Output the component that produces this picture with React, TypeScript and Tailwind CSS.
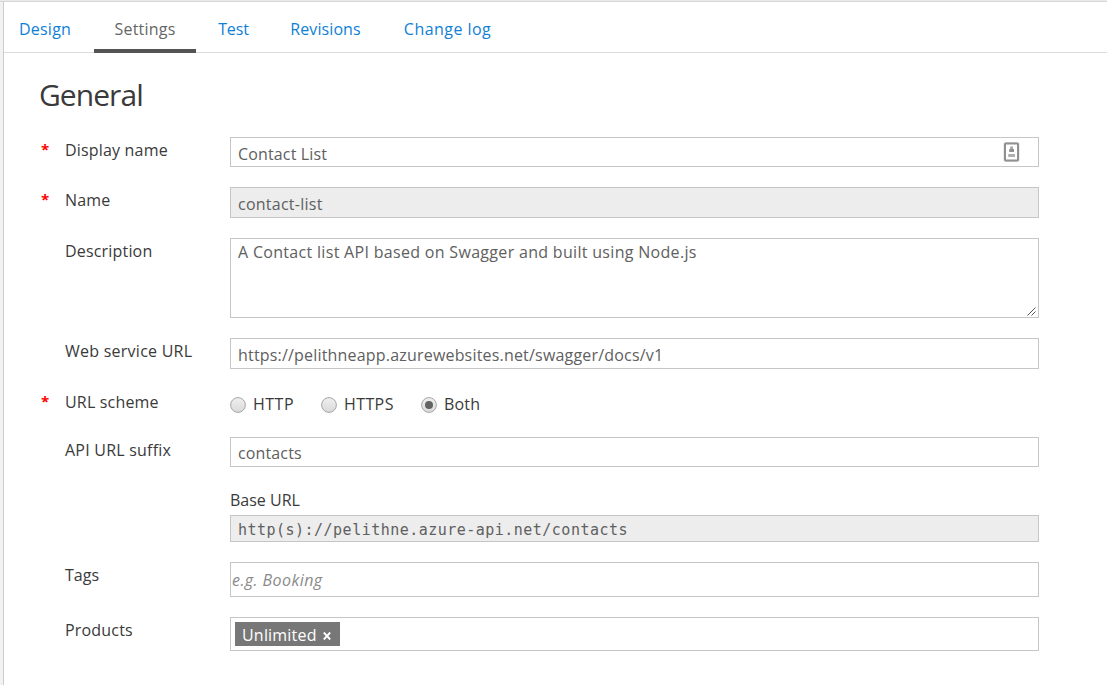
import React from "react";

const tabs = [
  { label: "Design", box: "ml-[15px] w-[52px]", tracking: "tracking-[0.25px]" },
  { label: "Settings", box: "ml-[23px] w-[102px] text-[#666]", tracking: "tracking-[0.2px]", active: true },
  { label: "Test", box: "ml-[22px] w-[31px]", tracking: "tracking-[-0.1px]" },
  { label: "Revisions", box: "ml-[41px] w-[71px]", tracking: "tracking-[0.1px]" },
  { label: "Change log", box: "ml-[42px] w-[89px]", tracking: "tracking-[0.45px]" },
];

type RowProps = {
  label: string;
  tracking?: string;
  required?: boolean;
  children: React.ReactNode;
};

function Row({ label, tracking = "tracking-[0.18px]", required, children }: RowProps) {
  return (
    <div className="flex items-start">
      <span className="w-[26px] shrink-0 pl-[2px] text-[15px] font-bold leading-[24px] text-[#f00]">
        {required ? "*" : ""}
      </span>
      <label className={`w-[165px] shrink-0 whitespace-nowrap pt-px leading-[24px] ${tracking}`}>{label}</label>
      <div className="w-[809px] shrink-0">{children}</div>
    </div>
  );
}

function Radio({ label, checked, box, tracking }: { label: string; checked?: boolean; box: string; tracking: string }) {
  return (
    <div className={`flex items-center ${box}`}>
      <svg width="16" height="16" viewBox="0 0 16 16" className="mr-[7px] mt-[2px] shrink-0">
        <defs>
          <linearGradient id="radioFill" x1="0" y1="0" x2="0" y2="1">
            <stop offset="0" stopColor="#f0f0f0" />
            <stop offset="1" stopColor="#d9d9d9" />
          </linearGradient>
        </defs>
        <circle cx="8" cy="8" r="7.4" fill="url(#radioFill)" stroke="#a6a6a6" strokeWidth="1" />
        {checked && <circle cx="8" cy="8" r="4" fill="#636363" />}
      </svg>
      <span className={`whitespace-nowrap leading-[24px] ${tracking}`}>{label}</span>
    </div>
  );
}

export default function App() {
  return (
    <div className="flex h-[685px] w-[1107px] flex-col overflow-hidden bg-[#f2f2f2] font-['Open_Sans','Noto_Sans',sans-serif] text-[16px] text-[#3a3a3a]">
      <div className="h-[2px] shrink-0 border-b border-[#d6d6d6] bg-[#eaeaea]" />
      <div className="ml-[3px] flex flex-1 flex-col border-l border-[#ccc] bg-white">
        <nav className="flex h-[51px] shrink-0 border-b border-[#dcdcdc] text-[#0f7fd6]">
          {tabs.map((tab) => (
            <div key={tab.label} className={`relative flex h-[51px] justify-center ${tab.box}`}>
              <span className={`whitespace-nowrap pt-[15px] leading-[24px] ${tab.tracking}`}>{tab.label}</span>
              {tab.active && <div className="absolute bottom-0 left-0 h-[4px] w-full bg-[#545454]" />}
            </div>
          ))}
        </nav>

        <h1 className="ml-[35px] mt-[22px] h-[62px] text-[30px] leading-[40px] tracking-[-0.95px]">General</h1>

        <form className="ml-[35px] flex flex-col gap-[20px]">
          <Row label="Display name" required>
            <div className="flex h-[30px] items-center justify-between border border-[#c6c6c6] pl-[7px] pr-[18px] text-[#606060]">
              <span className="pt-[4px] leading-[24px] tracking-[0.15px]">Contact List</span>
              <svg width="17" height="20" viewBox="0 0 17 20">
                <rect x="1.5" y="1" width="14" height="18" rx="1.5" fill="#fff" stroke="#dcdcdc" strokeWidth="2" />
                <rect x="2" y="1.6" width="13" height="16.8" rx="1" fill="#fff" stroke="#909090" strokeWidth="2" />
                <rect x="7.3" y="4.5" width="2.6" height="3" fill="#a0a0a0" />
                <rect x="6.2" y="7" width="4.8" height="3" fill="#909090" />
                <rect x="5.2" y="12" width="6.8" height="3" fill="#b0b0b0" />
              </svg>
            </div>
          </Row>
          <Row label="Name" required>
            <div className="flex h-[31px] items-center border border-[#c6c6c6] bg-[#ededed] pl-[7px] text-[#606060]">
              <span className="pt-[3px] leading-[24px] tracking-[0.25px]">contact-list</span>
            </div>
          </Row>
          <Row label="Description">
            <div className="relative h-[80px] border border-[#c6c6c6] pl-[7px] pt-px text-[#606060]">
              <span className="leading-[24px] tracking-[0.31px]">A Contact list API based on Swagger and built using Node.js</span>
              <svg width="9" height="9" viewBox="0 0 9 9" className="absolute bottom-[1px] right-[2px]">
                <path d="M0.5 8.5L8.5 0.5M4.5 8.5L8.5 4.5" fill="none" stroke="#555" strokeWidth="1" />
              </svg>
            </div>
          </Row>
          <Row label="Web service URL" tracking="tracking-[0.25px]">
            <div className="flex h-[31px] items-center border border-[#c6c6c6] pl-[7px] text-[#606060]">
              <span className="pt-[2px] leading-[24px] tracking-[0.19px]">https://pelithneapp.azurewebsites.net/swagger/docs/v1</span>
            </div>
          </Row>
          <Row label="URL scheme" required>
            <div className="flex h-[28px] items-start pt-[3px]">
              <Radio label="HTTP" box="w-[91px]" tracking="tracking-[0.5px]" />
              <Radio label="HTTPS" box="w-[100px]" tracking="tracking-[0.4px]" />
              <Radio label="Both" box="w-[80px]" tracking="tracking-[0.2px]" checked />
            </div>
          </Row>
          <Row label="API URL suffix" tracking="tracking-[0.22px]">
            <div className="flex h-[30px] items-center border border-[#c6c6c6] pl-[7px] text-[#606060]">
              <span className="pt-[2px] leading-[24px] tracking-[0.13px]">contacts</span>
            </div>
            <div className="mt-[21px] h-[27px] leading-[24px]">Base URL</div>
            <div className="flex h-[27px] items-center border border-[#c6c6c6] bg-[#ededed] pl-[7px] font-['DejaVu_Sans_Mono',monospace] text-[15px] tracking-[0.48px] text-[#606060]">
              <span className="pt-[2px] leading-[24px]">http(s)://pelithne.azure-api.net/contacts</span>
            </div>
          </Row>
          <Row label="Tags" tracking="tracking-[0px]">
            <div className="flex h-[35px] items-center border border-[#c6c6c6] pl-px italic text-[#8a8a8a]">
              <span className="pt-px leading-[24px] tracking-[0.42px]">e.g. Booking</span>
            </div>
          </Row>
          <Row label="Products">
            <div className="h-[34px] border border-[#c6c6c6] pl-[4px] pt-[4px]">
              <div className="flex h-[24px] w-[105px] items-center bg-[#777] pl-[7px] text-white">
                <span className="w-[81px] pt-px leading-[24px] tracking-[0.2px]">Unlimited</span>
                <svg width="8" height="8" viewBox="0 0 8 8" className="mt-[3px]">
                  <path d="M0.8 0.5L7.2 7.5M7.2 0.5L0.8 7.5" stroke="#fff" strokeWidth="1.9" />
                </svg>
              </div>
            </div>
          </Row>
        </form>
      </div>
    </div>
  );
}
